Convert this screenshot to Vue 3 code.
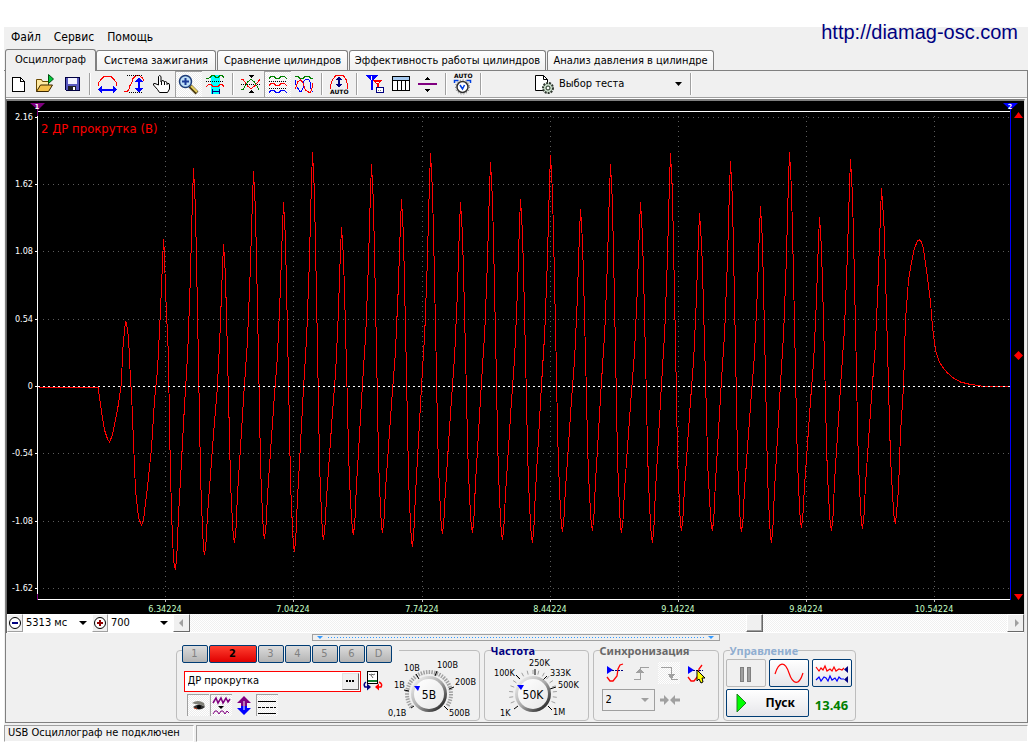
<script setup>
import { ref } from 'vue'

const tabs = [
  { name: 'Осциллограф', size: 'w1' },
  { name: 'Система зажигания', size: 'w2' },
  { name: 'Сравнение цилиндров', size: 'w3' },
  { name: 'Эффективность работы цилиндров', size: 'w4' },
  { name: 'Анализ давления в цилиндре', size: 'w5' },
]
const activeTab = ref(0)
const channels = ['1', '2', '3', '4', '5', '6', 'D']
const activeChannel = ref('2')
const channelName = ref('ДР прокрутка')

const yTicks = [
  [117, '2.16'], [184, '1.62'], [251, '1.08'], [319, '0.54'],
  [386, '0'], [453, '-0.54'], [521, '-1.08'], [588, '-1.62'],
]
const xTicks = [
  [165, '6.34224'], [293, '7.04224'], [422, '7.74224'], [550, '8.44224'],
  [678, '9.14224'], [806, '9.84224'], [934, '10.54224'],
]

const head = [
  [38, 387], [98, 387], [98, 390], [101, 412], [104, 430], [107, 439], [109, 442], [112, 435],
  [117, 410], [121, 383], [122, 353], [124, 330], [125, 322], [126, 323], [128, 337], [130, 380],
  [131, 393], [133, 442], [135, 490], [138, 518], [141, 525], [143, 520], [147, 487], [151, 448],
  [154, 400], [157, 370], [160, 310], [163, 239], [164, 255], [165, 290], [168, 357], [169, 428],
  [171, 513], [173, 560], [175, 570],
]
const extremes = [
  [193, 168], [204, 555], [223, 244], [234, 543], [253, 171], [264, 539], [283, 202], [294, 552],
  [312, 152], [323, 540], [341, 227], [353, 535], [371, 164], [382, 533], [401, 199], [412, 547],
  [430, 153], [442, 534], [460, 202], [472, 533], [490, 162], [502, 540], [520, 199], [532, 543],
  [550, 155], [562, 532], [580, 209], [592, 531], [610, 164], [621, 533], [640, 202], [652, 543],
  [670, 153], [681, 531], [699, 213], [712, 531], [730, 161], [741, 532], [760, 206], [771, 543],
  [789, 152], [801, 528], [819, 217], [831, 531], [850, 159], [862, 529], [881, 188], [895, 524],
]
const tail = [
  [898, 490], [900, 433], [903, 387], [905, 320], [908, 280], [911, 262], [914, 248], [917, 241],
  [919, 240], [921, 242], [923, 249], [926, 270], [930, 302], [932, 327], [935, 350], [938, 360],
  [942, 367], [947, 373], [953, 378], [960, 382], [968, 384], [980, 386], [1009, 387],
]
const rise = [[0.08, 0.04], [0.16, 0.13], [0.27, 0.22], [0.49, 0.4], [0.68, 0.54], [0.82, 0.72], [0.93, 0.9], [1, 1]]
const fall = [[0.08, 0.05], [0.17, 0.1], [0.3, 0.28], [0.46, 0.52], [0.56, 0.68], [0.65, 0.81], [0.8, 0.92], [0.9, 0.98], [1, 1]]

function buildTrace() {
  const points = [...head]
  let [px, py] = head[head.length - 1]
  for (const [x, y] of extremes) {
    const shape = y < py ? rise : fall
    for (const [u, v] of shape) points.push([px + (x - px) * u, py + (y - py) * v])
    px = x
    py = y
  }
  points.push(...tail)
  return points.map(([x, y]) => (x + 0.5).toFixed(1) + ',' + y.toFixed(1)).join(' ')
}
const trace = buildTrace()

function ring(cx, cy, from, to, step, r1, r2) {
  let d = ''
  for (let a = from; a <= to; a += step) {
    const t = (a * Math.PI) / 180
    d += `M${cx + r1 * Math.sin(t)} ${cy - r1 * Math.cos(t)}L${cx + r2 * Math.sin(t)} ${cy - r2 * Math.cos(t)}`
  }
  return d
}
const voltRing = ring(428, 694, -125, 125, 7, 20, 24)
const freqRing = ring(532, 694, -112, 112, 14, 20, 24)
</script>

<template>
  <div class="page">
    <a class="site" href="#">http://diamag-osc.com</a>
    <div class="window">
      <nav class="menu">
        <button type="button">Файл</button>
        <button type="button">Сервис</button>
        <button type="button">Помощь</button>
      </nav>

      <div class="tabs" role="tablist">
        <button
          v-for="(t, i) in tabs" :key="t.name" type="button" role="tab"
          :aria-selected="i === activeTab" :class="['tab', t.size, { active: i === activeTab }]"
          @click="activeTab = i"
        >{{ t.name }}</button>
      </div>

      <main class="sheet">
        <div class="toolbar">
          <button type="button" class="tool first" aria-label="Новый">
            <svg class="px" viewBox="0 0 27 26"><path d="M7.5 6.500h8l4 4v9.500h-12z" fill="#fff" stroke="#000" /><path d="M15.500 6.500v4h4" fill="none" stroke="#000" /></svg>
          </button>
          <button type="button" class="tool" aria-label="Открыть">
            <svg viewBox="0 0 27 26"><path d="M4.500 20.500v-12h5l1 2h6v4" fill="#ffe9a0" stroke="#6b4a00" /><path d="M4.500 20.500l4-6.500h12l-4 6.500z" fill="#f3c14b" stroke="#3a2600" /><path d="M16.500 3.500l5 4.500-5 4.500z" fill="#00c83c" stroke="#005010" /></svg>
          </button>
          <button type="button" class="tool" aria-label="Сохранить">
            <svg class="px" viewBox="0 0 27 26"><path d="M6.500 6.500h14v13h-13l-1-1z" fill="#5a5ac0" stroke="#000040" /><rect x="9" y="7" width="9" height="6" fill="#f4f4ff" /><rect x="9" y="15" width="8" height="4" fill="#202028" /><rect x="14" y="16" width="2" height="3" fill="#fff" /></svg>
          </button>
          <i class="sep"></i>
          <button type="button" class="tool" aria-label="Период">
            <svg class="px" viewBox="0 0 27 26"><path d="M4.500 15v-3l2-3 3-3 2-1h4l2 1 3 3 2 3v3" fill="none" stroke="#f00" /><path d="M7 18.500h13" stroke="#00f" stroke-width="2" /><path d="M4 18.500l4-4v8zM23 18.500l-4-4v8z" fill="#00f" /></svg>
          </button>
          <button type="button" class="tool" aria-label="Амплитуда">
            <svg class="px" viewBox="0 0 27 26"><path d="M3 20.500h3l2-2 1-4 2-3 1-4 3-3h3l3 2 2 3" fill="none" stroke="#f00" /><path d="M6 4.500h16M8 21.500h14" stroke="#000" stroke-dasharray="1 1" /><path d="M18 9v10" stroke="#00f" stroke-width="2" /><path d="M18 6l-4 5h8zM18 22l-4-5h8z" fill="#00f" /></svg>
          </button>
          <button type="button" class="tool" aria-label="Рука">
            <svg viewBox="0 0 27 26"><path d="M10.500 14V5.500q1-2 2.500 0V11l1-1.500 2 .5.500 1 1-.5 1.500 1 .5 1 1.500 0 .500 1.500v4l-2 3.500h-8l-2-3-4-4.500q-.5-2 1.500-1.500z" fill="#fff" stroke="#000" /><path d="M13.500 11v3M16.500 11v3M19 12v2" stroke="#000" /></svg>
          </button>
          <button type="button" class="tool pressed" aria-label="Лупа">
            <svg viewBox="0 0 27 26"><path d="M15 15l7 7" stroke="#4a3a10" stroke-width="4" /><path d="M16 15l6 6" stroke="#e8d060" stroke-width="2" /><circle cx="10.500" cy="10.500" r="6" fill="#bfe0f8" stroke="#1c3c78" stroke-width="1.500" /><path d="M7 10.500h7M10.500 7v7" stroke="#1c3c98" stroke-width="2" /></svg>
          </button>
          <button type="button" class="tool" aria-label="Фрагмент">
            <svg class="px" viewBox="0 0 27 26"><rect x="9" y="4" width="9" height="19" fill="#0ff" /><path d="M4 7.500h2l2-1 2-2h2l2 2h2l2-2h2l2 2" fill="none" stroke="#008000" /><path d="M4 10.500h18" stroke="#000" stroke-dasharray="1 1" /><path d="M4 15.500l3-2 2 0 2 2h5l2-2h2l2 2" fill="none" stroke="#f00" /><path d="M10 20.500h7M10.500 18v5M17.500 18v5" stroke="#000080" /></svg>
          </button>
          <i class="sep"></i>
          <button type="button" class="tool" aria-label="Свести">
            <svg class="px" viewBox="0 0 27 26"><path d="M11 4h6l-3 3zM11 22h6l-3-3z" fill="#000" /><path d="M4 13.500h19" stroke="#000" stroke-dasharray="1 1" /><path d="M4 8.500h2l5 7 3 2 3-2 6-7" fill="none" stroke="#f00" /><path d="M4 18.500h2l5-8 3-2 3 2 5 8" fill="none" stroke="#008000" /></svg>
          </button>
          <button type="button" class="tool pressed" aria-label="Раздельно">
            <svg class="px" viewBox="0 0 27 26"><path d="M5 7.500l2-2h3l2 2h3l2-2h3l3 2" fill="none" stroke="#008000" /><path d="M5 10.500h18M5 17.500h18" stroke="#000" stroke-dasharray="1 1" /><path d="M5 14.500l2-2h3l2 2h3l2-2h3l3 2" fill="none" stroke="#f00" /><path d="M5 21.500l2-2h3l2 2h3l2-2h3l3 2" fill="none" stroke="#00f" /></svg>
          </button>
          <button type="button" class="tool" aria-label="Вместе">
            <svg class="px" viewBox="0 0 27 26"><path d="M4 5.500h3l2 2h3l2-2h4l2 2h2" fill="none" stroke="#008000" /><path d="M4.500 9v4l4 7h2l2-4v-5l2-3h3l2 4v5l2 4" fill="none" stroke="#00f" /><path d="M4.500 18l2-7 3-2 2 2 3 8 3 2h2l2-5v-4" fill="none" stroke="#f00" /></svg>
          </button>
          <i class="sep"></i>
          <button type="button" class="tool" aria-label="Автомасштаб">
            <svg class="px" viewBox="0 0 27 26"><path d="M4.500 18v-4l2-5 3-4 2-1h4l2 1 3 4 1 5v4" fill="none" stroke="#f00" /><path d="M13 7v8" stroke="#000080" stroke-width="2" /><path d="M13 5l-3 4h6zM13 17l-3-4h6z" fill="#000080" /><text x="4" y="23" class="tiny">AUTO</text></svg>
          </button>
          <i class="sep"></i>
          <button type="button" class="tool" aria-label="Маркеры">
            <svg class="px" viewBox="0 0 27 26"><path d="M4 4h13l-5 6v9h-2v-9z" fill="#00f" /><path d="M12 9h9l-3 4v6h-2v-6l-4-3z" fill="#f00" /><path d="M10.500 5v4M15 11.500h3" stroke="#fff" fill="none" /><rect x="15.500" y="16.500" width="7" height="5" fill="#fff" stroke="#000080" /><path d="M17 19.500h4" stroke="#808080" stroke-dasharray="1 1" /></svg>
          </button>
          <button type="button" class="tool" aria-label="Таблица">
            <svg class="px" viewBox="0 0 27 26"><rect x="4.500" y="5.500" width="17" height="14" fill="#fff" stroke="#000" /><rect x="5" y="6" width="16" height="3" fill="#a6caf0" /><path d="M4 9.500h18M9.500 9v10M13.500 9v10M17.500 9v10" stroke="#000" /></svg>
          </button>
          <button type="button" class="tool" aria-label="Сжать">
            <svg class="px" viewBox="0 0 27 26"><path d="M3 13h19" stroke="#800080" stroke-width="2" /><path d="M10 9l2.500-3L15 9zM10 18l2.500 3L15 18z" fill="#000" /></svg>
          </button>
          <i class="sep"></i>
          <button type="button" class="tool" aria-label="Автонастройка">
            <svg viewBox="0 0 27 26"><text x="4" y="7" class="tiny">AUTO</text><circle cx="12.500" cy="16" r="5.500" fill="#fff" stroke="#303030" stroke-width="1.500" /><circle cx="12.500" cy="16" r="7" fill="none" stroke="#606060" stroke-dasharray="1 2" /><path d="M4.500 12v-2.500h4M20.500 12v-2.500h-4M10 14l2.500 4 2-4" fill="none" stroke="#0040e0" stroke-width="1.500" /></svg>
          </button>
          <i class="sep"></i>
          <label class="test">
            <svg viewBox="0 0 21 20"><path d="M1.500 1.500h8l4 4v11h-12z" fill="#fff" stroke="#000" /><path d="M9.500 1.500v4h4" fill="none" stroke="#000" /><circle cx="14" cy="14" r="5" fill="#c8dcc8" stroke="#303830" stroke-width="2" stroke-dasharray="2 1" /><circle cx="14" cy="14" r="2" fill="#fff" stroke="#203020" /></svg>
            <select aria-label="Выбор теста"><option>Выбор теста</option></select>
            <svg class="arrow" viewBox="0 0 8 4"><path d="M0 0h7L3.500 4z" /></svg>
          </label>
          <i class="sep"></i>
        </div>

        <div class="scope">
          <svg class="plot" viewBox="7 101 1017 513">
            <g class="grid">
              <path v-for="t in yTicks" :key="'h' + t[0]" :d="`M43 ${t[0]}.5H1009`" />
              <path v-for="t in xTicks" :key="'v' + t[0]" :d="`M${t[0]}.500 116V599`" />
            </g>
            <path class="axis" d="M37.500 111V600M38 111.500H1010M38 599.500H1010" />
            <path v-for="t in yTicks" :key="'t' + t[0]" class="axis" :d="`M35 ${t[0]}.5h3`" />
            <path v-for="t in xTicks" :key="'b' + t[0]" class="xtick" :d="`M${t[0]}.500 600v2`" />
            <text v-for="t in yTicks" :key="t[1]" class="ylab" x="33" :y="t[0] + 3">{{ t[1] }}</text>
            <text v-for="t in xTicks" :key="t[1]" class="xlab" :x="t[0]" y="612">{{ t[1] }}</text>
            <polyline class="trace" :points="trace" />
            <path class="zero" d="M38 386.500H1010" />
            <text class="series" x="41" y="133">2 ДР прокрутка (В)</text>
            <path d="M30 103h15l-7 7z" fill="#800080" /><path d="M37.500 108v8M37.500 594v6" stroke="#800080" />
            <text class="mark" x="37" y="109">1</text>
            <path d="M1010.500 106V600" stroke="#00f" stroke-width="1" />
            <path d="M1003 103h15l-7.500 7z" fill="#00f" />
            <text class="mark" x="1010" y="109">2</text>
            <path d="M1014 118h9l-4.500-6zM1018.500 351l4.500 4.500-4.500 4.500-4.500-4.500zM1014 594h9l-4.500 6z" fill="#f00" />
          </svg>
          <div class="scroller">
            <button type="button" class="sq" aria-label="Уменьшить"><svg viewBox="0 0 14 14"><circle cx="7" cy="7" r="5.500" fill="#fff" stroke="#000" /><path d="M4 7h6" stroke="#000080" stroke-width="2" /></svg></button>
            <div class="combo c1"><select aria-label="Длительность"><option>5313 мс</option></select><svg class="arrow" viewBox="0 0 8 4"><path d="M0 0h8L4 4z" /></svg></div>
            <button type="button" class="sq" aria-label="Увеличить"><svg viewBox="0 0 14 14"><circle cx="7" cy="7" r="5.500" fill="#fff" stroke="#000" /><path d="M4 7h6M7 4v6" stroke="#900000" stroke-width="2" /></svg></button>
            <div class="combo c2"><select aria-label="Масштаб"><option>700</option></select><svg class="arrow" viewBox="0 0 8 4"><path d="M0 0h8L4 4z" /></svg></div>
            <button type="button" class="sq raised" aria-label="Влево"><svg viewBox="0 0 14 14"><path d="M8 3v8L4 7z" fill="#a0a0a0" /></svg></button>
            <div class="track"><div class="before"></div><div class="thumb"></div></div>
            <button type="button" class="sq raised" aria-label="Вправо"><svg viewBox="0 0 14 14"><path d="M6 3v8l4-4z" fill="#a0a0a0" /></svg></button>
          </div>
        </div>

        <div class="bottom">
        <div class="splitter">
          <svg viewBox="0 0 7 4"><path d="M0 0h6L3 3z" fill="#3399ff" /></svg>
          <i></i>
          <svg viewBox="0 0 7 4"><path d="M0 0h6L3 3z" fill="#3399ff" /></svg>
        </div>

        <div class="controls">
          <section class="group channel">
            <div class="chan-left">
              <div class="chans">
                <button v-for="c in channels" :key="c" type="button" :class="{ on: c === activeChannel }" @click="activeChannel = c">{{ c }}</button>
              </div>
              <div class="name-row">
                <div class="name-box">
                  <input v-model="channelName" type="text" aria-label="Имя канала">
                  <button type="button" aria-label="Выбрать"><svg viewBox="0 0 14 14"><path d="M3 7h8" stroke="#000" stroke-width="2" stroke-dasharray="2 1" /></svg></button>
                </div>
                <button type="button" class="ico" aria-label="Прибор"><svg viewBox="0 0 20 22"><rect x="4.500" y="1.500" width="10" height="12" fill="#fff" stroke="#000" /><path d="M5 11h9" stroke="#108030" stroke-width="2" /><path d="M6 4l1 1 2-1 1 1 2-1M8 5l2 3" fill="none" stroke="#606060" /><path d="M3 12q-3 2-1 5h3" fill="none" stroke="#000080" stroke-width="1.500" /><path d="M4 13.500v7l4-3.500z" fill="#000080" /><path d="M16 12q4 2 2 5h-3" fill="none" stroke="#f00" stroke-width="1.500" /><path d="M16 13.500v7L12 17z" fill="#f00" /></svg></button>
              </div>
              <div class="view-row">
                <button type="button" class="ico pressed" aria-label="Показать"><svg viewBox="0 0 22 22"><path d="M5 9q6-4 12 0l1 4-3-2-7-1z" fill="#808078" /><path d="M6 13q6-5 12 0-6 5-12 0z" fill="#303030" /><circle cx="12" cy="13" r="2" fill="#000" /><path d="M7 14l3 1" stroke="#c04020" /></svg></button>
                <button type="button" class="ico pressed" aria-label="Фильтр"><svg viewBox="0 0 22 22"><path d="M3 9l3-5 2 5 3-5 2 5 3-5 2 4 2-3" fill="none" stroke="#800080" stroke-width="1.500" /><path d="M8 12h6l-3 3z" /><path d="M3 20l2-3 2 0 2 3 2-3h2l2 3 2-3 2 2" fill="none" stroke="#800080" /></svg></button>
                <button type="button" class="ico" aria-label="Сместить"><svg viewBox="0 0 22 22"><path d="M11 2l7 7h-4v3H8V9H4z" fill="#800080" /><path d="M11 21l7-7h-4v-2H8v2H4z" fill="#00f" /><path d="M11 7v9" stroke="#f0f0f0" /></svg></button>
                <button type="button" class="ico pressed" aria-label="Линии"><svg class="px" viewBox="0 0 22 22"><path d="M2 7.500h18M2 19.500h18" stroke="#000" /><path d="M2 13.500h18" stroke="#000" stroke-dasharray="3 1" /></svg></button>
              </div>
            </div>
            <svg class="knob" viewBox="386 651 92 68">
              <defs>
                <linearGradient id="rim" x1="0" y1="0" x2="1" y2="1"><stop offset="0" stop-color="#fff" /><stop offset=".5" stop-color="#aaa" /><stop offset="1" stop-color="#000" /></linearGradient>
                <linearGradient id="face" x1="0" y1="0" x2="1" y2="1"><stop offset="0" stop-color="#fff" /><stop offset="1" stop-color="#e8e8e8" /></linearGradient>
              </defs>
              <path :d="voltRing" stroke="#a0a0a0" stroke-width="1.500" />
              <path d="M410 708l3-2M403 690l5 1M415 674l3 5M436 671l-2 5M453 687l-5 2M447 710l-4-4" stroke="#000" />
              <circle cx="428" cy="694" r="18" fill="url(#rim)" /><circle cx="428" cy="694" r="15" fill="url(#face)" />
              <path d="M413 686h6l-2 5z" fill="#00f" />
              <text class="val" x="428" y="699">5В</text>
              <text x="403" y="671">10В</text><text x="436" y="668">100В</text><text x="393" y="688">1В</text>
              <text x="454" y="685">200В</text><text x="387" y="716">0,1В</text><text x="448" y="716">500В</text>
            </svg>
          </section>

          <fieldset class="group freq">
            <legend>Частота</legend>
            <svg class="knob" viewBox="484 657 103 62">
              <path :d="freqRing" stroke="#a0a0a0" />
              <path d="M513 709l4-3M515 675l4 4M534 669v6M546 676l-4 4M555 687l-6 2M551 710l-4-4" stroke="#000" />
              <circle cx="532" cy="694" r="18" fill="url(#rim)" /><circle cx="532" cy="694" r="15" fill="url(#face)" />
              <path d="M516 685h7l-3 5z" fill="#00f" />
              <text class="val" x="532" y="699">50K</text>
              <text x="528" y="666">250K</text><text x="493" y="676">100K</text><text x="549" y="676">333K</text>
              <text x="557" y="688">500K</text><text x="499" y="716">1K</text><text x="552" y="715">1M</text>
            </svg>
          </fieldset>

          <fieldset class="group sync">
            <legend>Синхронизация</legend>
            <div class="sync-row">
              <button type="button" class="ico" aria-label="Синхронизация"><svg viewBox="0 0 22 22"><path d="M3 15l3 4h3l4-5 1-7 2-4 3-1" fill="none" stroke="#f00" stroke-width="1.300" /><path d="M3 4l6 4-6 4z" fill="#00f" /><path d="M8 8.500h11" stroke="#000080" stroke-dasharray="2 1" /></svg></button>
              <button type="button" class="ico" aria-label="По фронту"><svg class="px" viewBox="0 0 22 22"><path d="M3 17.500h6V5.500h9" fill="none" stroke="#a0a0a0" /><path d="M9 6l-4 5h8z" fill="#a0a0a0" /></svg></button>
              <button type="button" class="ico check" aria-label="По спаду"><svg class="px" viewBox="0 0 22 22"><path d="M3 5.500h10v12h7" fill="none" stroke="#a0a0a0" /><path d="M13.500 17l-4-5h8z" fill="#a0a0a0" /></svg></button>
              <button type="button" class="ico" aria-label="Маркер"><svg viewBox="0 0 22 22"><path d="M3 15l3 4h3l4-5 1-7 3-4" fill="none" stroke="#f00" stroke-width="1.300" /><path d="M3 4l6 4-6 4z" fill="#00f" /><path d="M8 8.500h10" stroke="#000080" stroke-dasharray="2 1" /><path d="M12 8v11l2-2 2 4 2-1-1-4h3z" fill="#ff0" stroke="#000" /></svg></button>
            </div>
            <div class="sync-row2">
              <div class="combo small"><select aria-label="Канал синхронизации"><option>2</option></select><svg class="arrow" viewBox="0 0 8 4"><path d="M0 0h8L4 4z" fill="#a0a0a0" /></svg></div>
              <button type="button" class="ico" aria-label="По центру"><svg viewBox="0 0 22 22"><path d="M1 11h5M21 11h-5" stroke="#a0a0a0" stroke-width="3" /><path d="M5 6l5 5-5 5zM16 6l-5 5 5 5z" fill="#a0a0a0" /></svg></button>
            </div>
          </fieldset>

          <fieldset class="group manage">
            <legend>Управление</legend>
            <div class="big-row">
              <button type="button" class="big off" aria-label="Пауза"><svg class="px" viewBox="0 0 38 27"><path d="M13.500 7.500h3v14h-3zM20.500 7.500h3v14h-3z" fill="#a0a0a0" stroke="#808080" /></svg></button>
              <button type="button" class="big" aria-label="Синус"><svg viewBox="0 0 38 27"><path d="M5 14C9 1 15 1 19 13S29 26 33 13" fill="none" stroke="#f00" stroke-width="1.200" /></svg></button>
              <button type="button" class="big" aria-label="Запись"><svg viewBox="0 0 38 27"><path d="M3 7l3 4 2-3 2 2 2-4 2 5 3-2 2 2 2-4 2 4 3-2 3 1 2-2" fill="none" stroke="#f00" stroke-width="1.200" /><path d="M3 20l3-3 2 4 3-4 2 1 2 3 2-5 2 4 3-2 2 3 2-4 2 2 3 0" fill="none" stroke="#00f" stroke-width="1.200" /><path d="M35 6v7l-4-3.500zM35 16v7l-4-3.500z" fill="#000080" /></svg></button>
              <button type="button" class="big start"><svg viewBox="0 0 12 20"><path d="M1 1l9 9-9 9z" fill="#0f0" stroke="#208020" /></svg><span>Пуск</span></button>
              <output>13.46</output>
            </div>
          </fieldset>
        </div>
        </div>
      </main>

      <footer class="status">
        <span>USB Осциллограф не подключен</span>
        <span></span>
      </footer>
    </div>
  </div>
</template>

<style>
body { margin: 0; background: #fff; }
</style>

<style scoped>
* { box-sizing: border-box; }
.page {
  position: relative; padding: 27px 4px 4px; color: #000;
  font: 11px/14px "DejaVu Sans Condensed", "Noto Sans", sans-serif;
}
button, select, input { font: inherit; color: inherit; margin: 0; }
button { display: flex; align-items: center; justify-content: center; padding: 0; border: 0; background: none; }
svg { display: block; flex: none; }
.px { shape-rendering: crispEdges; }
.site {
  position: absolute; right: 14px; top: 20px; color: #000080; text-decoration: none;
  font: 20px/24px "Liberation Sans", Arial, sans-serif;
}
.window { display: flex; flex-direction: column; background: #f0f0f0; }
.menu { display: flex; gap: 13px; height: 22px; padding: 0 7px 2px; font-size: 12px; }

.tabs { display: flex; align-items: flex-end; height: 22px; padding-left: 1px; border-bottom: 1px solid #808080; }
.tab {
  height: 20px; margin-right: 1px; border: 1px solid #808080; border-bottom: 0;
  border-radius: 3px 3px 0 0; background: linear-gradient(#fff, #f0f0f0); white-space: nowrap;
}
.tab.active { height: 22px; margin-bottom: -1px; background: #f0f0f0; padding-bottom: 2px; }
.w1 { width: 91px; margin-right: 0; }
.w2 { width: 120px; }
.w3 { width: 131px; }
.w4 { width: 197px; }
.w5 { width: 167px; }

.sheet { margin-left: 1px; border: 1px solid #808080; border-top: 0; }
.toolbar { display: flex; height: 28px; padding-bottom: 1px; border-bottom: 1px solid #fff; box-shadow: inset 0 -1px #a0a0a0; }
.tool { width: 27px; height: 26px; }
.tool.first { width: 26px; justify-content: flex-end; }
.tool svg { width: 27px; height: 26px; }
.pressed, .check {
  background: repeating-conic-gradient(#fff 0 25%, #ececec 0 50%) 0 0 / 2px 2px;
}
.pressed { box-shadow: inset 1px 1px #a0a0a0; }
.sep { width: 8px; height: 22px; margin-top: 2px; background: linear-gradient(90deg, transparent 3px, #a0a0a0 3px, #a0a0a0 4px, #fff 4px, #fff 5px, transparent 5px); }
.tiny { font: bold 6px "DejaVu Sans", sans-serif; fill: #000; }
.test { display: flex; align-items: center; width: 153px; margin-left: 49px; padding-right: 4px; }
.test > svg:first-child { width: 21px; height: 20px; }
select { appearance: none; border: 0; border-radius: 0; outline: 0; background: transparent; padding: 0; min-width: 0; flex: 1; height: 16px; }
.test select { margin-left: 4px; }
.arrow { width: 8px; height: 4px; }

.scope { border: solid; border-width: 2px 1px 0; border-color: #808080 #e3e3e3 #fff #696969; margin-right: 2px; }
.plot { width: 100%; height: auto; background: #000; }
.plot text { font: 9px "DejaVu Sans Condensed", "Noto Sans", sans-serif; }
.grid path { stroke: #5c5c5c; stroke-dasharray: 1 4; shape-rendering: crispEdges; }
.zero { stroke: #fff; stroke-dasharray: 2 3; shape-rendering: crispEdges; }
.axis { stroke: #fff; shape-rendering: crispEdges; }
.xtick { stroke: #c0c0c0; }
.plot .ylab { fill: #fff; text-anchor: end; }
.plot .xlab { fill: #c8ffc8; text-anchor: middle; }
.plot .series { fill: #f00; font-size: 13px; }
.plot .mark { fill: #fff; text-anchor: middle; font-size: 7px; font-weight: bold; }
.trace { fill: none; stroke: #f00; shape-rendering: crispEdges; }

.scroller { display: flex; height: 19px; border-bottom: 1px solid #fff; }
.sq { width: 16px; height: 18px; border: 1px solid; border-color: #fff #a0a0a0 #a0a0a0 #fff; background: #f0f0f0; }
.sq svg { width: 14px; height: 14px; }
.raised { width: 17px; }
.raised, .thumb { border-color: #fff #696969 #696969 #fff; }
.combo { display: flex; align-items: center; background: #fff; padding: 0 5px 0 3px; }
.c1 { width: 69px; }
.c2 { width: 65px; }
.track { flex: 1; display: flex; background: repeating-conic-gradient(#fff 0 25%, #f0f0f0 0 50%) 0 0 / 2px 2px; }
.before { width: 68%; }
.thumb { width: 17px; border-width: 1px; border-style: solid; background: #f0f0f0; box-shadow: inset -1px -1px #a0a0a0; }

.bottom { padding-right: 2px; }
.splitter { display: flex; align-items: center; width: 408px; height: 7px; margin: 1px auto 0; padding: 0 4px; gap: 4px; border: 1px solid #a0a0a0; }
.splitter svg { width: 7px; height: 4px; }
.splitter i { flex: 1; height: 1px; background: repeating-linear-gradient(90deg, #3399ff 0 1px, transparent 1px 3px); }

.controls { display: flex; justify-content: center; align-items: flex-end; gap: 4px; height: 81px; padding-bottom: 1px; }
.group { margin: 0; padding: 0; min-width: 0; border: 1px solid #bdbdbd; border-radius: 4px; height: 77px; }
legend { margin-left: 6px; padding: 0; font: bold 11px/13px "Noto Sans", sans-serif; }
.channel { display: flex; width: 304px; height: 71px; }
.chan-left { width: 210px; padding-left: 5px; }
.chans { display: flex; gap: 1px; width: 217px; margin-top: -6px; background: #f0f0f0; }
.chans button { width: 26px; height: 18px; border: 1px solid #003c74; border-radius: 2px; color: #808080; background: linear-gradient(#dcdcdc, #b4b4b4); }
.chans .on { width: 48px; color: #000; font-weight: bold; background: linear-gradient(#ff4030, #e00000); }
.name-row { display: flex; align-items: center; gap: 2px; margin: 7px 0 2px 2px; }
.name-box { display: flex; align-items: center; width: 177px; height: 21px; border: 1px solid #f00; background: #fff; padding-right: 1px; }
.name-box input { flex: 1; min-width: 0; border: 0; outline: 0; padding: 0 3px; background: none; }
.name-box button { width: 17px; height: 17px; background: #f0f0f0; border: 1px solid; border-color: #e3e3e3 #696969 #696969 #e3e3e3; }
.name-box button svg { width: 14px; height: 14px; }
.name-row .ico, .name-row .ico svg { width: 20px; height: 22px; }
.view-row { display: flex; gap: 1px; margin-left: 5px; }
.ico { width: 22px; height: 22px; }
.ico svg { width: 22px; height: 22px; }
.knob { overflow: visible; }
.channel .knob { width: 92px; height: 68px; }
.freq .knob { width: 103px; height: 62px; }
.knob text { font: 9px "DejaVu Sans Condensed", "Noto Sans", sans-serif; fill: #000; }
.knob .val { font-size: 12px; text-anchor: middle; }
.freq { width: 105px; }
.freq legend { color: #000080; }
.sync { width: 126px; }
.sync legend { color: #696969; }
.sync-row { display: flex; gap: 5px; margin: 5px 0 0 10px; }
.sync-row2 { display: flex; gap: 4px; margin: 5px 0 0 8px; }
.small { width: 53px; height: 22px; background: #f0f0f0; border: 1px solid #a0a0a0; }
.manage { width: 133px; }
.manage legend { color: #90aed0; }
.big-row { display: grid; grid-template-columns: 40px 40px 40px; gap: 2px 3px; margin: 2px 0 0 2px; }
.big { height: 28px; border: 1px solid #003c74; border-radius: 2px; background: linear-gradient(#fff, #e6e6ea); }
.big svg { width: 38px; height: 27px; }
.off { border-color: #b8b8b8; background: #f0f0f0; }
.start { grid-column: span 2; justify-content: flex-start; padding-left: 9px; gap: 18px; font: bold 12px/14px "Noto Sans", sans-serif; }
.start svg { width: 12px; height: 20px; }
output { align-self: center; padding-top: 4px; text-align: center; color: #008000; font: bold 13px/14px "Noto Sans", sans-serif; }

.status { display: grid; grid-template-columns: 190px 1fr; gap: 2px; padding-top: 2px; }
.status span { height: 17px; padding: 0 3px; border: 1px solid; border-color: #a0a0a0 #fff #fff #a0a0a0; }
</style>
